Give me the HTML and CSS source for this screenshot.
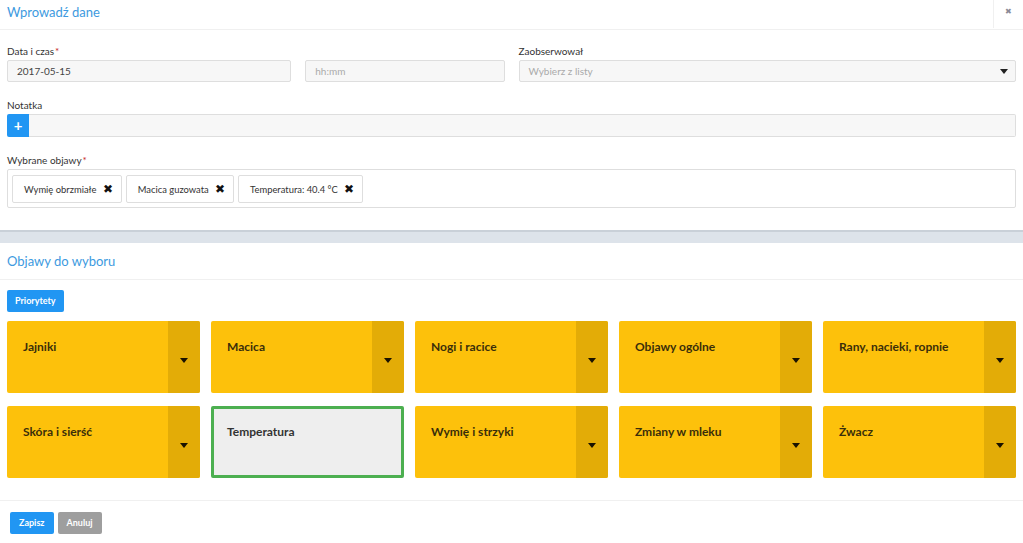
FILE: index.html
```html
<!DOCTYPE html>
<html lang="pl">
<head>
<meta charset="utf-8">
<link rel="stylesheet" href="styles.css">
</head>
<body>
<div class="modal">
  <header class="modal-head">
    <h1 class="title">Wprowadź dane</h1>
    <button class="close" aria-label="Zamknij">&#x2716;</button>
  </header>

  <section class="form">
    <div class="row">
      <div class="datetime">
        <div class="group">
          <label class="lbl">Data i czas<span class="req">*</span></label>
          <div class="input">2017-05-15</div>
        </div>
        <div class="group">
          <label class="lbl">&nbsp;</label>
          <div class="input ph">hh:mm</div>
        </div>
      </div>
      <div class="group">
        <label class="lbl">Zaobserwował</label>
        <div class="input select ph">Wybierz z listy
          <svg class="caret" width="8" height="5" viewBox="0 0 8 5"><path d="M0 0h8L4 5z" fill="#222"/></svg>
        </div>
      </div>
    </div>

    <div class="group spaced">
      <label class="lbl">Notatka</label>
      <div class="igroup">
        <button class="plus">+</button>
        <div class="input flat"></div>
      </div>
    </div>

    <div class="group spaced">
      <label class="lbl">Wybrane objawy<span class="req">*</span></label>
      <div class="tagbox">
        <span class="tag">Wymię obrzmiałe <span class="x">&#x2716;</span></span>
        <span class="tag">Macica guzowata <span class="x">&#x2716;</span></span>
        <span class="tag">Temperatura: 40.4 °C <span class="x">&#x2716;</span></span>
      </div>
    </div>
  </section>

  <div class="band"></div>

  <header class="sub-head">
    <h2 class="title">Objawy do wyboru</h2>
  </header>

  <section class="choices">
    <button class="btn blue">Priorytety</button>
    <div class="grid">
      <div class="card"><span class="name">Jajniki</span><span class="drop"><i></i></span></div>
      <div class="card"><span class="name">Macica</span><span class="drop"><i></i></span></div>
      <div class="card"><span class="name">Nogi i racice</span><span class="drop"><i></i></span></div>
      <div class="card"><span class="name">Objawy ogólne</span><span class="drop"><i></i></span></div>
      <div class="card"><span class="name">Rany, nacieki, ropnie</span><span class="drop"><i></i></span></div>
      <div class="card"><span class="name">Skóra i sierść</span><span class="drop"><i></i></span></div>
      <div class="card active"><span class="name">Temperatura</span></div>
      <div class="card"><span class="name">Wymię i strzyki</span><span class="drop"><i></i></span></div>
      <div class="card"><span class="name">Zmiany w mleku</span><span class="drop"><i></i></span></div>
      <div class="card"><span class="name">Żwacz</span><span class="drop"><i></i></span></div>
    </div>
  </section>

  <footer class="foot">
    <button class="btn blue wide">Zapisz</button>
    <button class="btn grey wide">Anuluj</button>
  </footer>
</div>
</body>
</html>
```

FILE: styles.css
```css
* { box-sizing: border-box; }
html, body { margin: 0; padding: 0; background: #fff; }
body {
  font-family: Lato, "Open Sans", "Liberation Sans", sans-serif;
  color: #333;
  font-size: 10px;
}
button { font-family: inherit; }

.modal-head {
  height: 30px;
  display: flex;
  align-items: stretch;
  justify-content: space-between;
  border-bottom: 1px solid #f0f0f0;
}
.title {
  margin: 0;
  font-size: 13px;
  font-weight: 400;
  color: #3d9ae0;
  line-height: 25px;
  padding-left: 7px;
}
.modal-head .title { line-height: 24px; }
.close {
  width: 30px;
  border: 0;
  border-left: 1px solid #f0f0f0;
  background: #fff;
  color: #8a8a96;
  font-size: 8px;
  padding: 0 0 6px 0;
  margin-bottom: 1px;
}

.form { padding: 14px 7px 22px; }
.row {
  display: grid;
  grid-template-columns: 1fr 1fr;
  column-gap: 14px;
}
.datetime {
  display: grid;
  grid-template-columns: 284fr 199fr;
  column-gap: 14px;
}
.lbl {
  display: block;
  font-size: 10px;
  line-height: 15px;
  margin-bottom: 1px;
  color: #333;
}
.req { color: #c62828; margin-left: 1px; }
.input {
  height: 22px;
  border: 1px solid #dedede;
  border-radius: 2px;
  background: #f7f7f7;
  font-size: 10px;
  line-height: 20px;
  padding: 0 9px;
  color: #444;
}
.input.ph { color: #aaa; }
.select {
  position: relative;
}
.caret { position: absolute; right: 7px; top: 8px; }
.spaced { margin-top: 16px; }

.igroup { display: flex; height: 23px; }
.plus {
  width: 22px;
  border: 0;
  background: #2196f3;
  color: #fff;
  font-size: 15px;
  font-weight: 700;
  line-height: 23px;
  padding: 0;
  border-radius: 2px 0 0 2px;
}
.input.flat { flex: 1; height: 23px; border-left: 0; border-radius: 0 2px 2px 0; }

.tagbox {
  height: 39px;
  border: 1px solid #dedede;
  border-radius: 2px;
  padding: 5px 4px;
  display: flex;
  gap: 4px;
}
.tag {
  height: 28px;
  border: 1px solid #dedede;
  border-radius: 2px;
  background: #fff;
  display: inline-flex;
  align-items: center;
  padding: 0 8px 0 11px;
  font-size: 9.4px;
  color: #333;
  white-space: pre;
}
.tag .x { font-size: 11.5px; color: #111; margin-left: 4px; }

.band {
  height: 13px;
  background: #dde3ea;
  border-top: 2px solid #c9d0d8;
}

.sub-head {
  height: 37px;
  border-bottom: 1px solid #f0f0f0;
  display: flex;
  align-items: center;
}
.sub-head .title { line-height: 37px; }

.choices { padding: 10px 7px 22px; border-bottom: 1px solid #f0f0f0; }
.btn {
  height: 22px;
  border: 0;
  border-radius: 2px;
  color: #fff;
  font-weight: 700;
  font-size: 9px;
  padding: 0 8px;
  line-height: 22px;
}
.btn.wide { padding: 0 9px; }
.blue { background: #2196f3; }
.grey { background: #9e9e9e; }

.grid {
  margin-top: 9px;
  display: grid;
  grid-template-columns: repeat(5, 1fr);
  column-gap: 11px;
  row-gap: 13px;
}
.card {
  height: 72px;
  background: #fdc10b;
  border-radius: 2px;
  display: flex;
  justify-content: space-between;
  overflow: hidden;
}
.name {
  font-size: 12px;
  font-weight: 700;
  color: #3a2e0a;
  padding: 19px 0 0 16px;
  line-height: 14px;
}
.drop {
  width: 32px;
  background: #e3ac07;
  display: flex;
  align-items: center;
  justify-content: center;
  padding-top: 6px;
}
.drop i {
  width: 0; height: 0;
  border-left: 4px solid transparent;
  border-right: 4px solid transparent;
  border-top: 5px solid #1a1200;
}
.card.active {
  background: #eeeeee;
  border: 3px solid #4caf50;
}
.card.active .name { padding: 16px 0 0 13px; color: #333; }

.foot { padding: 11px 10px; display: flex; gap: 4px; }
```
